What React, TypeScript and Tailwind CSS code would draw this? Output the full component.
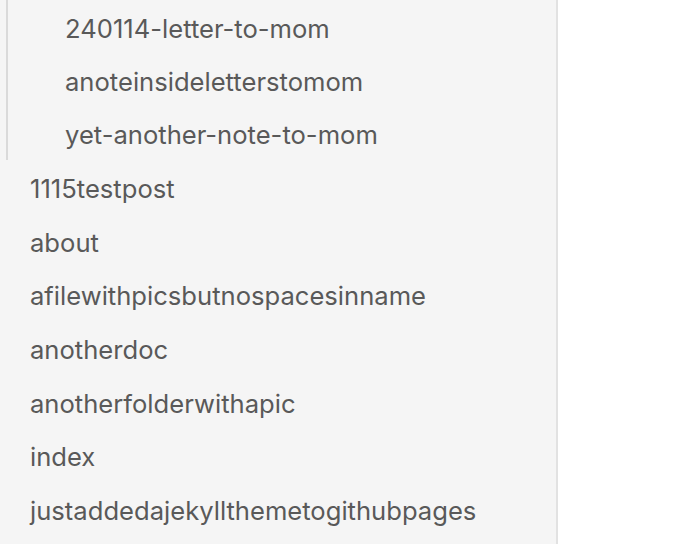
const nested = ["240114-letter-to-mom", "anoteinsideletterstomom", "yet-another-note-to-mom"];

const pages = [
  "1115testpost",
  "about",
  "afilewithpicsbutnospacesinname",
  "anotherdoc",
  "anotherfolderwithapic",
  "index",
  "justaddedajekyllthemetogithubpages",
];

export default function App() {
  return (
    <div className="flex h-[544px] w-[700px] overflow-hidden bg-white font-['Inter',sans-serif]">
      <nav className="h-full w-[558px] shrink-0 border-r-2 border-[#e2e2e2] bg-[#f5f5f5] text-[25.6px] text-[#595959]">
        <ul className="ml-[6px] border-l-2 border-[#dadada]">
          {nested.map((n) => (
            <li key={n} className="flex h-[53.4px] items-center pl-[57px] pt-[4px]">
              {n}
            </li>
          ))}
        </ul>
        <ul>
          {pages.map((p) => (
            <li key={p} className="flex h-[53.7px] items-center pl-[30px] pt-[4px]">
              {p}
            </li>
          ))}
        </ul>
      </nav>
      <main className="flex-1" />
    </div>
  );
}
